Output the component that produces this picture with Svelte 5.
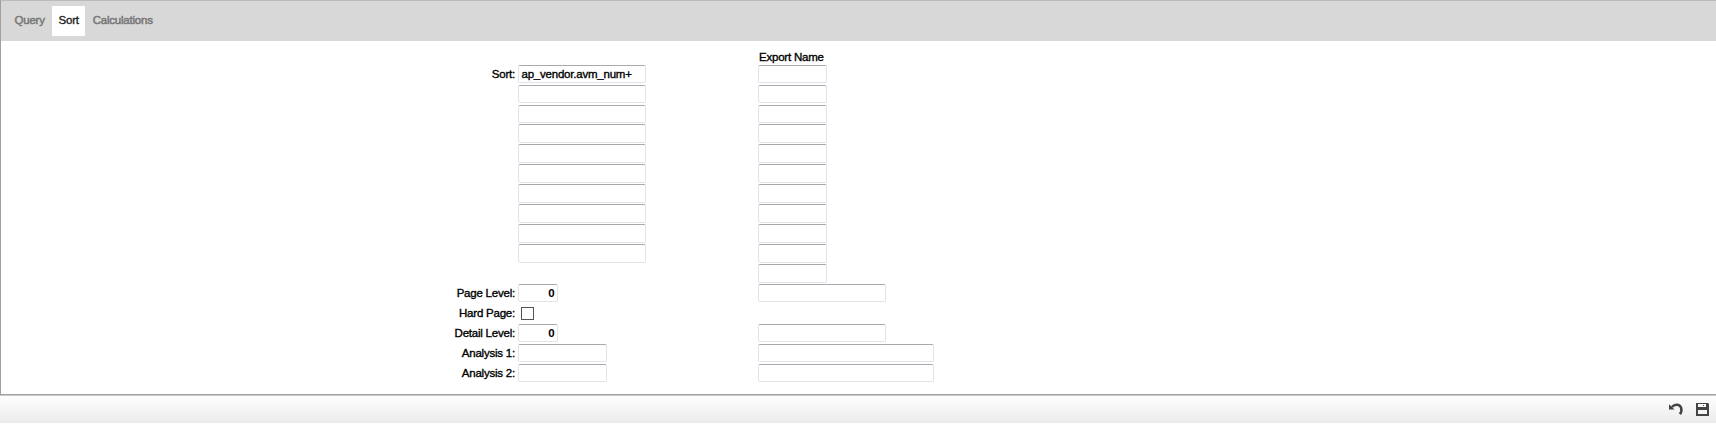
<script>
  const rows = [
    { label: 'Sort:', value: 'ap_vendor.avm_num+', w: 128, right: 69 },
    ...Array.from({ length: 9 }, () => ({ label: '', value: '', w: 128, right: 69 })),
    { label: '', w: 0, right: 69 },
    { label: 'Page Level:', value: '0', w: 40, num: true, right: 128 },
    { label: 'Hard Page:', check: true, w: 0, right: 0 },
    { label: 'Detail Level:', value: '0', w: 40, num: true, right: 128 },
    { label: 'Analysis 1:', value: '', w: 89, right: 176 },
    { label: 'Analysis 2:', value: '', w: 89, right: 176 }
  ];
</script>

<div class="window">
  <nav>
    <span class="tab">Query</span>
    <span class="tab active">Sort</span>
    <span class="tab calc">Calculations</span>
  </nav>
  <main>
    <div class="row head"><span></span><span></span><span class="title">Export Name</span></div>
    {#each rows as r}
      <div class="row">
        <span class="label">{r.label}</span>
        <div class="cell">
          {#if r.check}<span class="check"></span>{/if}
          {#if r.w}<div class="field" class:num={r.num} style="width:{r.w}px">{r.value}</div>{/if}
        </div>
        <div class="cell">
          {#if r.right}<div class="field" style="width:{r.right}px"></div>{/if}
        </div>
      </div>
    {/each}
  </main>
</div>
<footer>
  <svg class="undo" width="15" height="13" viewBox="0 0 15 13">
    <path d="M0 1.200V6.500H5.500L0 1.200Z" fill="#444" />
    <path d="M2.800 4C6 0.600 10.500 1.200 12 4.500C13 7 12.500 9 11 11.300" fill="none" stroke="#444" stroke-width="2.500" />
  </svg>
  <svg width="13" height="13" viewBox="0 0 13 13">
    <path fill="#444" fill-rule="evenodd" d="M0 0H12L13 1V13H0ZM2 1V4H10V1ZM2 7V11H11V7ZM7 2H8V3H7Z" />
  </svg>
</footer>

<style>
  :global(body) {
    margin: 0;
    background: #fff;
    overflow: hidden;
  }
  .window, footer {
    box-sizing: border-box;
    font: 11.5px/15px "Liberation Sans", Arial, sans-serif;
    letter-spacing: -0.22px;
    color: #000;
    -webkit-text-stroke: 0.35px currentColor;
  }
  .window {
    height: 394px;
    border-top: 1px solid #bbb;
    border-left: 1px solid #a0a0a0;
  }
  nav {
    display: flex;
    height: 40px;
    box-sizing: border-box;
    padding: 5px 0 5px 6px;
    background: #d8d8d8;
    color: #777;
    -webkit-text-stroke-width: 0.5px;
  }
  .tab {
    box-sizing: border-box;
    height: 30px;
    padding: 0 7.500px;
    line-height: 29px;
    width: 45px;
  }
  .tab.active {
    width: 33px;
    padding-left: 6.500px;
    background: #fff;
    color: #222;
    -webkit-text-stroke-width: 0.35px;
  }
  .tab.calc {
    width: 90px;
    padding-left: 7.700px;
  }
  main {
    padding-top: 7px;
  }
  .row {
    display: grid;
    grid-template-columns: 514px 237px 1fr;
    column-gap: 3px;
    height: 19.93px;
  }
  .row.head {
    height: 16.700px;
  }
  .title {
    padding-left: 1px;
    line-height: 18px;
    white-space: nowrap;
  }
  .label {
    text-align: right;
    line-height: 19px;
  }
  .cell {
    display: flex;
  }
  .field {
    box-sizing: border-box;
    height: 18.6px;
    padding: 0 2.5px;
    line-height: 17px;
    border: 1px solid #e0e3ea;
    border-top-color: #a9a9b0;
    border-radius: 2px;
    background: #fff;
  }
  .field.num {
    text-align: right;
    font-weight: bold;
    -webkit-text-stroke: 0;
  }
  .check {
    box-sizing: border-box;
    width: 13px;
    height: 13px;
    margin: 3px 0 0 3px;
    border: 1px solid #555;
  }
  footer {
    display: flex;
    align-items: flex-start;
    justify-content: flex-end;
    gap: 12px;
    height: 29px;
    padding: 8px 7px 0 0;
    border-top: 1px solid #a2a2a2;
    box-shadow: inset 0 1px #c8c8c8;
    background: linear-gradient(#fff, #ebebeb);
  }
</style>
